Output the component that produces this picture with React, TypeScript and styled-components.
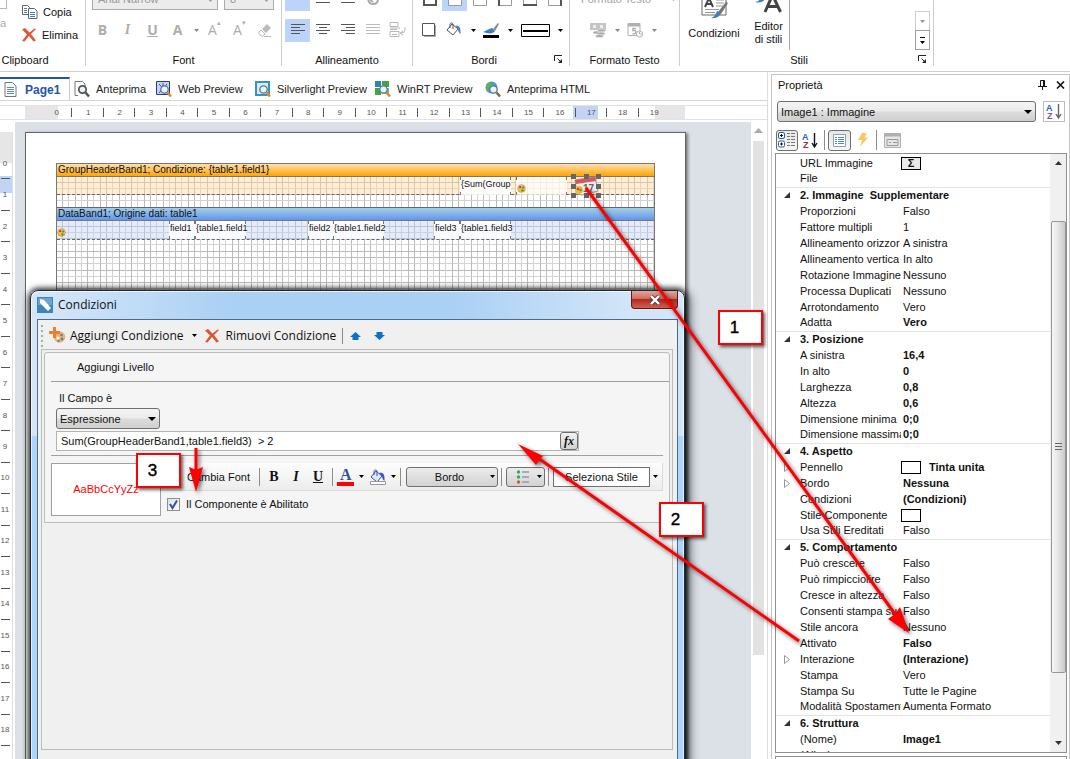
import React from "react";
import styled, { createGlobalStyle, css } from "styled-components";

const ui = `"Liberation Sans", Arial, sans-serif`;
const segoe = `"Open Sans", "Noto Sans", sans-serif`;

const Global = createGlobalStyle`
  *, *::before, *::after { box-sizing: border-box; }
  body { margin: 0; background: #fff; font: 11px/16px ${ui}; color: #111; overflow: hidden; }
  button, input, select { font: inherit; color: inherit; margin: 0; padding: 0; }
`;

/* ---------- shell ---------- */
const Shell = styled.div`
  position: relative;
  display: flex;
  flex-direction: column;
  height: 100vh;
  overflow: hidden;
`;
const Main = styled.div`
  display: flex;
  flex: 1;
  min-height: 0;
`;
const Workspace = styled.main`
  display: flex;
  flex-direction: column;
  flex: 1;
  min-width: 0;
  border-right: 1px solid #dcdcdc;
`;

/* ---------- ribbon ---------- */
const Ribbon = styled.header`
  display: flex;
  flex: none;
  height: 72px;
  border-bottom: 1px solid #cfcfcf;
`;
const Group = styled.section<{ $w: number }>`
  position: relative;
  display: flex;
  flex-direction: column;
  justify-content: flex-end;
  width: ${(p) => p.$w}px;
  height: 66px;
  border-right: 1px solid #cdcdcd;
  overflow: hidden;
`;
const GroupLabel = styled.div<{ $shift?: number; $tight?: boolean }>`
  position: relative;
  flex: none;
  height: 14px;
  margin-top: ${(p) => (p.$tight ? 2 : 10)}px;
  line-height: 16px;
  text-align: center;
  padding-right: ${(p) => p.$shift || 0}px;
`;
const Launcher = styled.button`
  position: absolute;
  right: 5px;
  top: 3px;
  width: 10px;
  height: 10px;
  border: 0;
  background: none;
  display: flex;
`;
const IconRow = styled.div<{ $pad?: number; $gap?: number }>`
  display: flex;
  flex: none;
  align-items: center;
  gap: ${(p) => p.$gap || 0}px;
  height: 24px;
  padding-left: ${(p) => p.$pad || 0}px;
  & + & { margin-top: 7px; }
`;
const IconButton = styled.button<{ $w?: number; $on?: boolean }>`
  display: flex;
  align-items: center;
  justify-content: center;
  flex: none;
  width: ${(p) => p.$w || 25}px;
  height: 23px;
  border: 0;
  background: ${(p) => (p.$on ? "#bcd4fb" : "none")};
`;
const Combo = styled.select<{ $w: number }>`
  appearance: none;
  width: ${(p) => p.$w}px;
  height: 22px;
  padding-left: 5px;
  border: 1px solid #ababab;
  border-radius: 0;
  background: #ececec;
  color: #9a9a9a;
  opacity: 1;
`;
const ComboWrap = styled.span`
  position: relative;
  display: flex;
  svg { position: absolute; right: 5px; top: 11px; pointer-events: none; }
`;
const ClipItem = styled.button`
  display: flex;
  align-items: center;
  gap: 5px;
  height: 23px;
  border: 0;
  background: none;
  &:disabled { color: #a3a3a3; }
`;
const ClipBody = styled.div`
  display: flex;
  gap: 14px;
  flex: none;
  height: 46px;
  margin-bottom: 4px;
`;
const PasteStub = styled.div`
  width: 8px;
  color: #a9a9b5;
  line-height: 20px;
  &::before { content: ""; display: block; width: 7px; height: 9px; border: solid #b5b5b5; border-width: 0 1px 1px 0; margin-bottom: 4px; }
`;
const StyleBody = styled.div`
  display: flex;
  flex: none;
  height: 56px;
  margin-bottom: -8px;
`;
const BigButton = styled.button<{ $w: number; $gap: number }>`
  display: flex;
  flex-direction: column;
  align-items: center;
  justify-content: flex-start;
  width: ${(p) => p.$w}px;
  border: 0;
  background: none;
  line-height: 13px;
  svg { flex: none; margin-bottom: ${(p) => p.$gap}px; }
`;
const Gallery = styled.div`
  display: flex;
  flex: 1;
  justify-content: flex-end;
  align-items: flex-end;
  height: 56px;
  padding-right: 3px;
  border-left: 1px solid #a8a8a8;
`;
const GalleryButtons = styled.div`
  display: flex;
  flex-direction: column;
`;
const GalleryButton = styled.button<{ $dim?: boolean }>`
  display: flex;
  align-items: center;
  justify-content: center;
  width: 15px;
  height: 20px;
  border: 1px solid ${(p) => (p.$dim ? "#cfcfcf" : "#a0a0a0")};
  background: #fff;
  & + & { margin-top: -1px; }
`;

/* ---------- page tabs and rulers ---------- */
const Tabs = styled.nav`
  display: flex;
  flex: none;
  height: 29px;
  padding-top: 5px;
  border-bottom: 1px solid #d6d6d6;
`;
const Tab = styled.button<{ $w: number; $on?: boolean }>`
  display: flex;
  align-items: center;
  gap: 6px;
  width: ${(p) => p.$w}px;
  height: 24px;
  padding-left: 4px;
  border: 0;
  background: none;
  white-space: nowrap;
  color: #222;
  ${(p) => p.$on && css`
    gap: 8px;
    height: 23px;
    font-weight: bold;
    font-size: 12px;
    color: #1f55a8;
    background: #fff;
    border-top: 2px solid #1f55a8;
    border-right: 1px solid #c9c9c9;
  `}
`;
const HRulerBar = styled.div`
  flex: none;
  margin: 4px 0 2px;
  padding-left: 25px;
  border: solid #e2e2e2;
  border-width: 1px 0;
  height: 15px;
`;
const HRuler = styled.div`
  width: 660px;
  height: 13px;
  padding-left: 16px;
  background: linear-gradient(90deg, #e6e6e6 33px, #fff 33px 548px, #c1d4f3 548px 573px, #fff 573px 630px, #e6e6e6 630px);
`;
const HCells = styled.div`
  display: grid;
  grid-template-columns: repeat(20, 1fr);
  width: 629px;
`;
const HCell = styled.span`
  position: relative;
  font-size: 8px;
  line-height: 14px;
  text-align: center;
  color: #555;
  &:not(:last-child)::after { content: ""; position: absolute; right: 0; top: 2px; width: 1px; height: 9px; background: #555; }
`;
const Body = styled.div`
  display: flex;
  flex: 1;
  min-height: 0;
`;
const VRuler = styled.div`
  flex: none;
  width: 13px;
  margin: 10px 2px 0 0;
  padding-top: 16px;
  border-right: 1px solid #e0ded8;
  background: linear-gradient(#e6e6e6 31px, #fff 31px 44px, #c1d4f3 44px 61px, #fff 61px);
`;
const VCells = styled.div`
  display: grid;
  grid-template-rows: repeat(19, 1fr);
  height: 598px;
`;
const VCell = styled.span`
  position: relative;
  display: flex;
  align-items: center;
  justify-content: center;
  padding-right: 2px;
  font-size: 8px;
  color: #555;
  &::after { content: ""; position: absolute; left: 1px; bottom: 0; width: 9px; height: 1px; background: #555; }
`;
const Canvas = styled.div`
  flex: 1;
  min-width: 0;
  padding: 10px 0 0 10px;
  background: #dce1e8;
  overflow: hidden;
`;
const Page = styled.div`
  width: 661px;
  height: 700px;
  padding: 30px 30px 0;
  border: 1px solid #666;
  background: #fff;
  box-shadow: 2px 1px 3px #777;
`;
const GridArea = styled.div`
  position: relative;
  height: 600px;
  border: 1px solid #777;
`;
const GridLines = styled.svg`
  position: absolute;
  inset: 0;
  width: 100%;
  height: 100%;
`;
const BandHead = styled.div<{ $blue?: boolean }>`
  position: relative;
  height: 13px;
  padding-left: 1px;
  line-height: 12px;
  font-size: 10px;
  border-bottom: 1px solid #777;
  background: ${(p) => (p.$blue ? "linear-gradient(#a3cfe4, #6495ed)" : "linear-gradient(#fee0b0, #ffa502)")};
  ${(p) => p.$blue && css`margin-top: 12px; border-top: 1px solid #666; height: 14px;`}
`;
const BandBody = styled.div<{ $blue?: boolean }>`
  position: relative;
  height: ${(p) => (p.$blue ? 19 : 18)}px;
  border-bottom: 1px dashed #666;
  background: ${(p) => (p.$blue ? "rgba(190,210,245,.42)" : "rgba(255,215,150,.42)")};
`;
const Field = styled.span<{ $x: number; $w: number; $faint?: boolean }>`
  position: absolute;
  top: 0;
  left: ${(p) => p.$x}px;
  width: ${(p) => p.$w}px;
  height: 18px;
  white-space: nowrap;
  font-size: 9px;
  line-height: 14px;
  background: ${(p) => (p.$faint ? "rgba(255,255,255,.7)" : "rgba(255,255,255,.85)")};
  border: solid #777;
  border-width: 0 1px;
  border-image: linear-gradient(#777 4px, transparent 4px 14px, #777 14px) 1;
`;
const Spot = styled.span<{ $x: number; $y: number }>`
  position: absolute;
  left: ${(p) => p.$x}px;
  top: ${(p) => p.$y}px;
  display: flex;
`;
const CanvasScroll = styled.div`
  display: flex;
  flex-direction: column;
  align-items: center;
  flex: none;
  width: 16px;
  padding: 6px 3px 0 2px;
  background: #fff;
`;
const CanvasThumb = styled.div`
  width: 11px;
  height: 514px;
  margin-top: 8px;
  background: #e2e2e2;
`;

/* ---------- property panel ---------- */
const Panel = styled.aside`
  display: flex;
  flex-direction: column;
  flex: none;
  width: 299px;
  margin: 2px 0 0 3px;
  padding: 0 2px 0 3px;
  border: 1px solid #c4c4c4;
  border-bottom: 0;
`;
const PanelTitle = styled.div`
  display: flex;
  align-items: center;
  gap: 9px;
  flex: none;
  height: 19px;
  padding: 0 2px 0 3px;
  h2 { flex: 1; margin: 0; font: inherit; }
`;
const Bare = styled.button`
  display: flex;
  border: 0;
  background: none;
`;
const ObjectRow = styled.div`
  display: flex;
  flex: none;
  gap: 7px;
  margin: 7px 2px 0;
  height: 21px;
`;
const SelectWrap = styled.span<{ $w?: number }>`
  position: relative;
  display: flex;
  ${(p) => (p.$w ? `width: ${p.$w}px;` : "flex: 1;")}
  svg { position: absolute; right: 4px; top: 9px; pointer-events: none; }
`;
const GlassSelect = styled.select`
  appearance: none;
  width: 100%;
  height: 21px;
  padding-left: 3px;
  border: 1px solid #707070;
  border-radius: 3px;
  background: linear-gradient(#f4f4f4, #ebebeb 48%, #dcdcdc 52%, #cfcfcf);
`;
const SortButton = styled.button`
  width: 22px;
  display: flex;
  align-items: center;
  justify-content: center;
  border: 1px solid #bdbdbd;
  background: #fff;
`;
const PanelTools = styled.div`
  display: flex;
  align-items: center;
  flex: none;
  height: 24px;
  margin: 6px 0 1px 1px;
`;
const Tool = styled.button<{ $w: number; $on?: boolean }>`
  display: flex;
  align-items: center;
  justify-content: center;
  width: ${(p) => p.$w}px;
  height: 21px;
  border: ${(p) => (p.$on ? "1px solid #6e6e6e" : "0")};
  border-radius: 3px;
  background: ${(p) => (p.$on ? "linear-gradient(#e6e6e6, #f6f6f6)" : "none")};
`;
const Sep = styled.i<{ $h?: number; $m?: string }>`
  flex: none;
  width: 1px;
  height: ${(p) => p.$h || 20}px;
  margin: ${(p) => p.$m || "0 3px"};
  background: #8c8c8c;
`;
const PropBox = styled.div`
  display: flex;
  flex: 1;
  min-height: 0;
  border: 1px solid #8f8f8f;
  overflow: hidden;
`;
const PropTable = styled.table`
  flex: 1;
  align-self: flex-start;
  table-layout: fixed;
  border-collapse: collapse;
  width: 275px;
  margin-top: 1px;
  td, th { padding: 0; height: 16px; line-height: 15px; text-align: left; white-space: nowrap; overflow: hidden; font-weight: normal; }
  tr.cat th { border-top: 1px solid #e4e4e4; font-weight: bold; }
  tr.cat td { border-top: 1px solid #e4e4e4; }
`;
const Value = styled.span<{ $b?: boolean }>`
  display: flex;
  align-items: center;
  height: 15px;
  padding-left: 2px;
  font-weight: ${(p) => (p.$b ? "bold" : "normal")};
`;
const Swatch = styled.i<{ $sum?: boolean }>`
  flex: none;
  display: flex;
  align-items: center;
  justify-content: center;
  width: 20px;
  height: 13px;
  margin: 0 8px 0 -2px;
  border: 1px solid #000;
  background: ${(p) => (p.$sum ? "#e9e9e9" : "#fff")};
  font: bold 11px/11px ${ui};
`;
const Twist = styled.span`
  display: flex;
  justify-content: center;
  padding-right: 3px;
`;
const PropScroll = styled.div`
  display: flex;
  flex-direction: column;
  align-items: center;
  flex: none;
  width: 16px;
  padding: 7px 0;
  background: #f0f0f0;
  svg { flex: none; }
`;
const PropThumb = styled.div`
  display: flex;
  align-items: center;
  justify-content: center;
  width: 15px;
  height: 452px;
  margin: 56px 0 auto;
  border: 1px solid #979797;
  border-radius: 2px;
  background: linear-gradient(90deg, #f7f7f7, #e4e4e4 50%, #c9c9c9);
`;
const HelpBox = styled.div`
  flex: none;
  height: 3px;
  margin-top: 3px;
  border: 1px solid #8f8f8f;
  border-bottom: 0;
`;

/* ---------- dialog ---------- */
const Dialog = styled.section`
  position: absolute;
  left: 30px;
  top: 290px;
  width: 655px;
  height: 520px;
  padding: 0 6px;
  border: 1px solid #1f2833;
  border-radius: 8px 8px 0 0;
  background:
    linear-gradient(90deg, transparent 20px, rgba(160,203,243,.8) 200px 420px, transparent 600px) 0 0 / 100% 28px no-repeat,
    linear-gradient(#d3e5f8 145px, #acd5fb 145px);
  box-shadow: 0 0 5px 2px rgba(0,0,0,.65), 3px 3px 10px 3px rgba(0,0,0,.45), inset 0 0 0 1px rgba(255,255,255,.7);
`;
const DialogTitle = styled.div`
  display: flex;
  align-items: center;
  gap: 5px;
  height: 28px;
  font: 12px/16px ${segoe};
  h1 { flex: 1; margin: 0; font: inherit; }
`;
const Close = styled.button`
  display: flex;
  align-items: center;
  justify-content: center;
  align-self: flex-start;
  width: 47px;
  height: 18px;
  border: 1px solid #5b1b17;
  border-top: 0;
  border-radius: 0 0 4px 4px;
  background: linear-gradient(#e2a79c, #cf6a5b 45%, #b5281c 50%, #d2604e);
`;
const Client = styled.div`
  height: 500px;
  padding: 0 4px 0 3px;
  border: 1px solid #4b6a8c;
  background: #f0f0f0;
`;
const DialogTools = styled.div`
  display: flex;
  align-items: center;
  height: 29px;
  padding-top: 2px;
  font: 12px/16px ${segoe};
`;
const Grip = styled.i`
  width: 2px;
  height: 22px;
  background: repeating-linear-gradient(#aaa 0 2px, transparent 2px 5px);
`;
const TextButton = styled.button<{ $gap?: number; $ml?: number }>`
  display: flex;
  align-items: center;
  gap: ${(p) => p.$gap || 6}px;
  margin-left: ${(p) => p.$ml || 0}px;
  border: 0;
  background: none;
  white-space: nowrap;
`;
const Outer = styled.div`
  height: 401px;
  padding: 2px;
  border: 1px solid #bcbcbc;
`;
const Rule = styled.div`
  display: flex;
  flex-direction: column;
  height: 171px;
  border: 1px solid #bcbcbc;
  border-radius: 3px 3px 0 0;
  background: #f5f5f5;
  padding-left: 6px;
`;
const RuleHead = styled.div`
  height: 29px;
  padding: 6px 0 0 26px;
  border-bottom: 1px solid #a0a0a0;
`;
const RuleField = styled.div`
  display: flex;
  flex-direction: column;
  align-items: flex-start;
  width: 523px;
  margin: 8px 0 0 5px;
  label { padding-left: 3px; height: 18px; }
`;
const ExprRow = styled.div`
  display: flex;
  width: 523px;
  height: 20px;
  margin-top: 2px;
  border: 1px solid #b4b4b4;
  background: #fff;
  input { flex: 1; min-width: 0; border: 0; outline: 0; padding-left: 4px; background: none; }
`;
const Fx = styled.button`
  width: 18px;
  height: 18px;
  border: 1px solid #6d6d6d;
  border-radius: 3px;
  background: linear-gradient(#f2f2f2, #d2d2d2);
  font: italic bold 12px/12px "Liberation Serif", serif;
`;
const FormatRow = styled.div`
  display: flex;
  margin: 4px 6px 0 0;
  padding-top: 7px;
  border-top: 1px solid #a0a0a0;
`;
const Preview = styled.div`
  flex: none;
  width: 110px;
  height: 53px;
  border: 1px solid #a0a0a0;
  background: #fff;
  color: #f00;
  line-height: 50px;
  text-align: center;
`;
const FormatSide = styled.div`
  flex: 1;
`;
const FormatTools = styled.div`
  display: flex;
  align-items: center;
  height: 28px;
  padding-left: 26px;
  border: solid #dadada;
  border-width: 0 1px 1px 0;
  background: linear-gradient(#fdfdfd, #ececec);
`;
const Letter = styled.button<{ $kind: "b" | "i" | "u" }>`
  width: 22px;
  border: 0;
  background: none;
  font: bold 14px/20px "Liberation Serif", serif;
  font-style: ${(p) => (p.$kind === "i" ? "italic" : "normal")};
  text-decoration: ${(p) => (p.$kind === "u" ? "underline" : "none")};
`;
const Glass = styled.button<{ $w: number; $white?: boolean }>`
  display: flex;
  align-items: center;
  justify-content: flex-end;
  width: ${(p) => p.$w}px;
  height: 20px;
  padding: 0 2px;
  border: 1px solid #707070;
  border-radius: ${(p) => (p.$white ? 0 : 3)}px;
  background: ${(p) => (p.$white ? "#fff" : "linear-gradient(#ececec, #d2d2d2)")};
  span { flex: 1; display: flex; justify-content: center; white-space: nowrap; }
`;
const CheckLabel = styled.label`
  display: flex;
  align-items: center;
  gap: 6px;
  margin: 5px 0 0 6px;
  line-height: 16px;
  span { display: grid; }
  span > * { grid-area: 1 / 1; }
  input { appearance: none; width: 13px; height: 13px; border: 1px solid #8e8f8f; background: linear-gradient(135deg, #dcdfe4, #fff); }
`;

/* ---------- callouts ---------- */
const Arrows = styled.svg`
  position: absolute;
  left: 0;
  top: 0;
  pointer-events: none;
  filter: drop-shadow(2px 2px 2px rgba(0,0,0,.6));
`;
const Callout = styled.div<{ $x: number; $y: number }>`
  position: absolute;
  left: ${(p) => p.$x}px;
  top: ${(p) => p.$y}px;
  width: 45px;
  height: 35px;
  padding-right: 12px;
  border: 2px solid #f00;
  background: #fff;
  box-shadow: 2px 2px 3px rgba(0,0,0,.6);
  font: 17px/32px ${ui};
  text-align: center;
  color: #000;
  -webkit-text-stroke: 0.4px #000;
`;

/* ---------- drawings ---------- */
const Caret = ({ c = "#000", w = 5 }: { c?: string; w?: number }) => (
  <svg width={w} height={Math.ceil(w / 2)} viewBox="0 0 10 6" preserveAspectRatio="none"><path d="M0 0h10L5 6z" fill={c} /></svg>
);
const LauncherIcon = () => (
  <svg width="9" height="9" viewBox="0 0 9 9" fill="none" stroke="#222"><path d="M.5 6V.5H8" /><path d="M3.500 3.500L7 7" /><path d="M8 4v4H4z" fill="#222" stroke="none" /></svg>
);
const CopyIcon = () => (
  <svg width="16" height="15" viewBox="0 0 16 15" stroke="#666" fill="#fff">
    <path d="M.5 1.500h5l2 2v7h-7z" /><path d="M6.500 4.500h6l2.500 2.500v7.500h-8.500z" />
    <path d="M2 4.500h3M2 6.500h3M2 8.500h3M8 8.500h5M8 10.500h5M8 12.500h5" stroke="#4a7ab8" />
  </svg>
);
const CrossIcon = () => (
  <svg width="15" height="14" viewBox="0 0 15 14" fill="#d9583a"><path d="M0 1.500L3 0l4.500 4.500L12.500.5 14 1 9 6l5 6.500-2.500 1L7 8l-4.500 5.500L0 13l5-6.500z" /></svg>
);
const Lines = ({ rows, c = "#555" }: { rows: [number, number][]; c?: string }) => (
  <svg width="16" height="14" viewBox="0 0 16 14" stroke={c}>
    {rows.map(([a, b], i) => <path key={i} d={`M${a} ${i * 3 + 1.5}H${b}`} />)}
  </svg>
);
const Box = ({ c = "#999", side = "", fill = "none" }: { c?: string; side?: string; fill?: string }) => (
  <svg width="14" height="15" viewBox="0 0 14 15" fill={fill} stroke={c}>
    <path d="M.5 .5h13v13H.5z" />
    {side === "all" && <path d="M1 1h12v12H1z" strokeWidth="2" stroke="#555" />}
    {side === "b" && <path d="M0 13h14" strokeWidth="2" stroke="#555" />}
    {side === "l" && <path d="M1 0v14" strokeWidth="2" stroke="#555" />}
    {side === "r" && <path d="M13 0v14" strokeWidth="2" stroke="#555" />}
  </svg>
);
const ShadowBox = () => (
  <svg width="15" height="15" viewBox="0 0 15 15"><path d="M2 2h12v12H2z" fill="#aaa" /><path d="M.5.5h12v12H.5z" fill="#fff" stroke="#555" /></svg>
);
const Bucket = ({ blue }: { blue?: boolean }) => (
  <svg width="17" height="16" viewBox="0 0 17 16">
    <path d="M6 2l6 5-5 6-6-5z" fill={blue ? "#dfe8f8" : "#fff"} stroke={blue ? "#3a55a0" : "#555"} />
    <path d="M4 6V2.500C4 .5 7 .5 7 2.500V7" fill="none" stroke={blue ? "#3a55a0" : "#555"} />
    <path d="M9 4c4-1 6 1 5.500 8-1.500-1-2.500-3-2.500-5z" fill={blue ? "#3a55c0" : "#4a7fc0"} />
    {blue && <path d="M.5 12.500h15v3H.5z" fill="#fff" stroke="#999" />}
  </svg>
);
const PenIcon = () => (
  <svg width="17" height="17" viewBox="0 0 17 17"><path d="M10 7l5-6 1 1-4 7z" fill="#888" /><path d="M0 10c3-1 5-3 9-4l3 3c-2 3-6 3-12 1z" fill="#3f7cc0" /><path d="M0 13h16v3H0z" /></svg>
);
const LineStyle = () => (
  <svg width="29" height="13" viewBox="0 0 29 13"><path d="M.5.5h28v12H.5z" fill="#fff" stroke="#000" /><path d="M2 7h25" stroke="#000" strokeWidth="2" /></svg>
);
const Eraser = () => (
  <svg width="14" height="13" viewBox="0 0 14 13"><path d="M9 0l4 4-5 5-4-4z" fill="#bbb" /><path d="M3 6l4 4-2 2H3L.5 9z" fill="none" stroke="#bbb" /><path d="M6 12.500h7" stroke="#bbb" /></svg>
);
const WrapIcon = () => (
  <svg width="17" height="16" viewBox="0 0 17 16" fill="none" stroke="#b8b8b8"><path d="M1 .5h8v4H1zM1 7.500h7M1 9.500h9v5H1zM3 12.500h5M1 6h10M16 5v3q0 3-4 3M14 9l-3 2 3 2" /></svg>
);
const CoinsIcon = () => (
  <svg width="17" height="16" viewBox="0 0 17 16"><path d="M0 1h16v7H0z" fill="#c4c4c4" /><path d="M3 3h3v3H3zM10 3h3v3h-3z" fill="#eee" /><ellipse cx="11.500" cy="8.500" rx="4" ry="1.500" fill="#aaa" stroke="#eee" strokeWidth=".6" /><ellipse cx="6" cy="10.500" rx="3" ry="1.300" fill="#aaa" /><ellipse cx="11" cy="11.500" rx="4" ry="1.500" fill="#aaa" stroke="#eee" strokeWidth=".6" /><ellipse cx="9.500" cy="14" rx="4" ry="1.500" fill="#aaa" stroke="#eee" strokeWidth=".6" /></svg>
);
const DateIcon = () => (
  <svg width="17" height="16" viewBox="0 0 17 16" fill="none" stroke="#b0b0b0"><path d="M1 1.500h12v12H1z" /><path d="M1 3h12" strokeWidth="3" /><path d="M9 6.500H6v2q3-.5 3 1.500T5.500 12" strokeWidth="1.500" /><circle cx="12.500" cy="12" r="3" fill="#fff" /><path d="M12.500 10v2h2" /></svg>
);
const StyleSheetIcon = () => (
  <svg width="27" height="26" viewBox="0 0 27 26"><path d="M1 1h24v20H1z" fill="#fff" stroke="#666" /><path d="M4 13l4-9 4 9M5 10h6" stroke="#444" strokeWidth="2" fill="none" /><path d="M15 6h8M15 9h8M15 12h7M4 15.500h14M4 18.500h10" stroke="#999" /><path d="M25 8l2 1-7 11-3-2z" fill="#777" /><path d="M16 17l4 2q-2 6-10 5 4-1 6-7z" fill="#3f7cc0" /></svg>
);
const StyleEditorIcon = () => (
  <svg width="28" height="22" viewBox="0 0 28 22"><path d="M10 18L17.500 1l8 17M13 12.500h10" stroke="#444" strokeWidth="3" fill="none" /><path d="M0 8q5 0 5-5l5 2q-3 5-10 3z" fill="#3f7cc0" /></svg>
);
const DocIcon = () => (
  <svg width="13" height="15" viewBox="0 0 13 15" fill="#fff" stroke="#777"><path d="M1 .5h7.500L12 4v10.500H1z" /><path d="M3 5.500h7M3 7.500h7M3 9.500h7M3 11.500h7" stroke="#5b86bd" /></svg>
);
const Magnifier = ({ kind }: { kind: "page" | "web" | "silver" | "win" | "html" }) => (
  <svg width="16" height="17" viewBox="0 0 16 17">
    {kind === "page" && <path d="M4 14.500H1V.5h7.500L11 3v3" fill="#fff" stroke="#777" />}
    {kind === "web" && <><path d="M.5.5h13v13H.5z" fill="#c9d2f2" stroke="#26398f" /><path d="M3 3l8 9M11 3l-8 9M7 2v10" stroke="#3a4fa8" /></>}
    {kind === "silver" && <path d="M1 1h13v13H1z" fill="#d4ecf7" stroke="#3b93bd" strokeWidth="2" />}
    {kind === "win" && <><path d="M0 0h6v6H0z" fill="#2f86b5" /><path d="M7 0h7v6H7z" fill="#3fa545" /><path d="M0 7h6v7H0z" fill="#3fa545" /><path d="M7 7h7v6H7z" fill="#7ac" /></>}
    {kind === "html" && <><circle cx="6.500" cy="6.500" r="6" fill="#4c9bd8" /><path d="M2 3q4-3 5 0t-2 4-3 3Q0 7 2 3z" fill="#5fb33f" /></>}
    <circle cx="8.500" cy="8.500" r="3.700" fill="#e8f3fb" stroke={kind === "page" ? "#555" : "#5b7690"} strokeWidth={kind === "page" ? 1.800 : 1.300} />
    <path d="M11.500 11.500l3.500 4" stroke={kind === "page" ? "#555" : kind === "html" ? "#776a50" : "#e08a1e"} strokeWidth="2.500" />
  </svg>
);
const Palette = ({ s = 9 }: { s?: number }) => (
  <svg width={s} height={s} viewBox="0 0 10 10"><circle cx="5" cy="5" r="4.300" fill="#f0c050" stroke="#b98a2c" strokeWidth=".6" /><circle cx="3.500" cy="3.500" r="1.200" fill="#d33" /><circle cx="6.800" cy="4" r="1.200" fill="#38b" /><circle cx="6" cy="7" r="1.300" fill="#3a3" /></svg>
);
const AddPalette = () => (
  <svg width="17" height="17" viewBox="0 0 17 17"><circle cx="10.500" cy="10" r="5.800" fill="#efb466" /><circle cx="9" cy="11" r="1.500" fill="#fff" /><circle cx="12.500" cy="8" r="1.300" fill="#4c86c6" /><circle cx="13" cy="12" r="1.400" fill="#4c86c6" /><circle cx="9.500" cy="14" r="1.200" fill="#4c86c6" /><path d="M4 0h3v4h4v3H7v4H4V7H0V4h4z" fill="#e38530" /></svg>
);
const Block = ({ up }: { up?: boolean }) => (
  <svg width="11" height="8" viewBox="0 0 11 8" fill="#0c72c6"><path d={up ? "M5.500 0L11 5H8.500v3h-6V5H0z" : "M5.500 8L11 3H8.500V0h-6v3H0z"} /></svg>
);
const AZ = ({ z = "#9b2f3a", arrow = "#111" }: { z?: string; arrow?: string }) => (
  <svg width="17" height="17" viewBox="0 0 17 17"><text x="0" y="8" fontSize="9" fontFamily="Liberation Sans" fontWeight="bold" fill="#2f62b5">A</text><text x="1" y="16" fontSize="9" fontFamily="Liberation Sans" fontWeight="bold" fill={z}>Z</text><path d="M12.500 1v13M10 11l2.500 4 2.500-4" fill="none" stroke={arrow} strokeWidth="1.400" /></svg>
);
const TreeIcon = () => (
  <svg width="18" height="16" viewBox="0 0 18 16" fill="#fff" stroke="#2c5ea8"><rect x=".5" y=".5" width="6" height="6" rx="1.500" /><rect x=".5" y="9" width="6" height="6" rx="1.500" /><path d="M2 3.500h3M3.500 2v3M2 12h3M3.500 10.500v3" stroke="#111" /><path d="M9 1.500h3M9 4.500h3M9 7.500h3M9 10.500h3M9 13.500h3M13 1.500h4M13 4.500h4M13 7.500h4M13 10.500h4M13 13.500h4" stroke="#777" /></svg>
);
const PropsIcon = () => (
  <svg width="13" height="13" viewBox="0 0 13 13" fill="#fff" stroke="#8aa0b8"><path d="M.5.5h12v12H.5z" /><path d="M2 3.500h2M5 3.500h6M2 5.500h2M5 5.500h6M2 7.500h2M5 7.500h6M2 9.500h2M5 9.500h6" stroke="#4a87d0" /></svg>
);
const Bolt = () => <svg width="10" height="14" viewBox="0 0 10 14"><path d="M4 0h5L6.500 4.500H10L2 14l2-7H0z" fill="#fbc766" /></svg>;
const FormIcon = () => (
  <svg width="17" height="15" viewBox="0 0 17 15" fill="#e6e6e6" stroke="#b0b0b0"><path d="M.5.5h16v14H.5z" /><path d="M1 2h15" strokeWidth="3" /><path d="M3 6.500h11v6H3zM5 9.500h2M9 9.500h4" stroke="#999" /></svg>
);
const CalendarGlyph = () => (
  <svg width="31" height="25" viewBox="-2 -2 31 25">
    <path d="M2 4l20-3 3 14-16 4-5-1z" fill="#eee" stroke="#999" /><path d="M2 4l20-3 1 4L3 8z" fill="#d8545c" />
    <text x="10" y="16" fontSize="10" fontWeight="bold" fill="#666" fontFamily="Liberation Sans">17</text>
    <circle cx="6" cy="14" r="4" fill="#f0b840" /><circle cx="5" cy="13" r="1.200" fill="#d33" /><circle cx="7.500" cy="14" r="1.200" fill="#3a3" />
    {[0, 13, 25].map((x) => [0, 10, 19].map((y) => x === 13 && y === 10 ? null : <rect key={x + "-" + y} x={x - 2} y={y - 2} width="5" height="5" fill="#666" />))}
  </svg>
);
const BulletIcon = () => (
  <svg width="14" height="14" viewBox="0 0 14 14"><circle cx="2.500" cy="2" r="1.700" fill="#2fae5a" /><circle cx="2.500" cy="7" r="1.700" fill="#2fae5a" /><circle cx="2.500" cy="12" r="1.700" fill="#e2523a" /><path d="M6 2h7M6 7h7M6 12h7" stroke="#a3abba" strokeWidth="2" /></svg>
);

/* ---------- data ---------- */
type Prop = { n: string; v?: string; b?: boolean; cat?: boolean; exp?: boolean; sw?: "sum" | "box" };
const props: Prop[] = [
  { n: "URL Immagine", sw: "sum" },
  { n: "File" },
  { n: "2. Immagine\u00a0 Supplementare", cat: true },
  { n: "Proporzioni", v: "Falso" },
  { n: "Fattore multipli", v: "1" },
  { n: "Allineamento orizzor", v: "A sinistra" },
  { n: "Allineamento vertica", v: "In alto" },
  { n: "Rotazione Immagine", v: "Nessuno" },
  { n: "Processa Duplicati", v: "Nessuno" },
  { n: "Arrotondamento", v: "Vero" },
  { n: "Adatta", v: "Vero", b: true },
  { n: "3. Posizione", cat: true },
  { n: "A sinistra", v: "16,4", b: true },
  { n: "In alto", v: "0", b: true },
  { n: "Larghezza", v: "0,8", b: true },
  { n: "Altezza", v: "0,6", b: true },
  { n: "Dimensione minima", v: "0;0", b: true },
  { n: "Dimensione massima", v: "0;0", b: true },
  { n: "4. Aspetto", cat: true },
  { n: "Pennello", v: "Tinta unita", b: true, exp: true, sw: "box" },
  { n: "Bordo", v: "Nessuna", b: true, exp: true },
  { n: "Condizioni", v: "(Condizioni)", b: true },
  { n: "Stile Componente", sw: "box" },
  { n: "Usa Stili Ereditati", v: "Falso" },
  { n: "5. Comportamento", cat: true },
  { n: "Può crescere", v: "Falso" },
  { n: "Può rimpicciolire", v: "Falso" },
  { n: "Cresce in altezza", v: "Falso" },
  { n: "Consenti stampa su", v: "Falso" },
  { n: "Stile ancora", v: "Nessuno" },
  { n: "Attivato", v: "Falso", b: true },
  { n: "Interazione", v: "(Interazione)", b: true, exp: true },
  { n: "Stampa", v: "Vero" },
  { n: "Stampa Su", v: "Tutte le Pagine" },
  { n: "Modalità Spostament", v: "Aumenta Formato" },
  { n: "6. Struttura", cat: true },
  { n: "(Nome)", v: "Image1", b: true },
  { n: "(Alias)" },
];

const full: [number, number][] = [[1, 15], [1, 15], [1, 15], [1, 15]];
const gridSteps = [0, 6, 13, 19, 25, 31, 38];

const FontKey = styled(IconButton)`
  font: bold 14px/20px "Open Sans", sans-serif;
  color: #adadad;
  i { font-family: "Liberation Serif", serif; }
  sup { font-size: 7px; line-height: 7px; align-self: flex-start; }
  &.thin { font-weight: normal; }
`;
const FontRow = () => (
  <IconRow $pad={4}>
    <FontKey>B</FontKey><FontKey><i>I</i></FontKey><FontKey><u>U</u></FontKey>
    <FontKey>A</FontKey><FontKey $w={12} aria-label="Menu colore testo"><Caret c="#888" /></FontKey>
    <FontKey className="thin">A<sup>▴</sup></FontKey><FontKey className="thin">A<sup>▾</sup></FontKey>
    <FontKey aria-label="Cancella"><Eraser /></FontKey>
  </IconRow>
);

const RibbonBar = () => (
  <Ribbon>
    <Group $w={86}>
      <ClipBody>
        <PasteStub>a</PasteStub>
        <div>
          <ClipItem><CopyIcon />Copia</ClipItem>
          <ClipItem><CrossIcon />Elimina</ClipItem>
        </div>
      </ClipBody>
      <GroupLabel $shift={35} $tight>Clipboard</GroupLabel>
    </Group>
    <Group $w={196}>
      <IconRow $pad={6} $gap={6}>
        <ComboWrap><Combo $w={126} disabled aria-label="Carattere"><option>Arial Narrow</option></Combo><Caret c="#999" /></ComboWrap>
        <ComboWrap><Combo $w={50} disabled aria-label="Dimensione"><option>8</option></Combo><Caret c="#999" /></ComboWrap>
      </IconRow>
      <FontRow />
      <GroupLabel>Font</GroupLabel>
    </Group>
    <Group $w={131}>
      <IconRow $pad={3}>
        <IconButton $on aria-label="In alto" />
        <IconButton aria-label="Al centro"><Lines rows={[[0, 0], [1, 15], [0, 0], [1, 15]]} /></IconButton>
        <IconButton aria-label="In basso"><Lines rows={[[0, 0], [0, 0], [3, 13], [1, 15]]} /></IconButton>
        <IconButton aria-label="Angolo"><svg width="14" height="14" viewBox="0 0 14 14" fill="none" stroke="#aaa" strokeWidth="2"><path d="M2 5q0 7 5 7t5-5-5-4-3 4 3 2" /></svg></IconButton>
      </IconRow>
      <IconRow $pad={3}>
        <IconButton $on aria-label="Sinistra"><Lines rows={[[1, 15], [1, 10], [1, 15], [1, 10]]} /></IconButton>
        <IconButton aria-label="Centro"><Lines rows={[[1, 15], [4, 12], [1, 15], [4, 12]]} /></IconButton>
        <IconButton aria-label="Destra"><Lines rows={[[1, 15], [6, 15], [1, 15], [6, 15]]} /></IconButton>
        <IconButton aria-label="Giustificato"><Lines rows={full} c="#bbb" /></IconButton>
        <IconButton aria-label="A capo"><WrapIcon /></IconButton>
      </IconRow>
      <GroupLabel>Allineamento</GroupLabel>
    </Group>
    <Group $w={157}>
      <IconRow $pad={4}>
        <IconButton aria-label="Tutti"><Box side="all" /></IconButton>
        <IconButton $on aria-label="Nessuno"><Box fill="#fff" /></IconButton>
        <IconButton aria-label="Sopra"><Box /></IconButton>
        <IconButton aria-label="Lato sinistro"><Box side="l" /></IconButton>
        <IconButton aria-label="Sotto"><Box side="b" /></IconButton>
        <IconButton aria-label="Lato destro"><Box side="r" /></IconButton>
      </IconRow>
      <IconRow $pad={4}>
        <IconButton aria-label="Ombra"><ShadowBox /></IconButton>
        <IconButton aria-label="Riempimento"><Bucket /></IconButton>
        <IconButton $w={12} aria-label="Menu riempimento"><Caret /></IconButton>
        <IconButton aria-label="Colore bordo"><PenIcon /></IconButton>
        <IconButton $w={12} aria-label="Menu colore"><Caret /></IconButton>
        <IconButton $w={39} aria-label="Stile linea"><LineStyle /></IconButton>
        <IconButton $w={10} aria-label="Menu stile"><Caret /></IconButton>
      </IconRow>
      <GroupLabel $shift={14}>Bordi<Launcher aria-label="Opzioni bordi"><LauncherIcon /></Launcher></GroupLabel>
    </Group>
    <Group $w={110}>
      <IconRow $pad={11} $gap={20}><ClipItem disabled>Formato Testo</ClipItem><Caret c="#999" /></IconRow>
      <IconRow $pad={16}>
        <IconButton aria-label="Valuta"><CoinsIcon /></IconButton>
        <IconButton $w={12} aria-label="Menu valuta"><Caret c="#888" /></IconButton>
        <IconButton aria-label="Data"><DateIcon /></IconButton>
        <IconButton $w={12} aria-label="Menu data"><Caret c="#888" /></IconButton>
      </IconRow>
      <GroupLabel>Formato Testo</GroupLabel>
    </Group>
    <Group $w={254}>
      <StyleBody>
        <BigButton $w={68} $gap={7}><StyleSheetIcon />Condizioni</BigButton>
        <BigButton $w={41} $gap={4}><StyleEditorIcon />Editor<br />di stili</BigButton>
        <Gallery>
          <GalleryButtons>
            <GalleryButton $dim aria-label="Su"><Caret c="#999" /></GalleryButton>
            <GalleryButton aria-label="Altri stili"><svg width="5" height="7" viewBox="0 0 5 7"><path d="M0 0h5v1H0zM0 4h5L2.500 7z" /></svg></GalleryButton>
          </GalleryButtons>
        </Gallery>
      </StyleBody>
      <GroupLabel $shift={15}>Stili<Launcher aria-label="Opzioni stili"><LauncherIcon /></Launcher></GroupLabel>
    </Group>
  </Ribbon>
);

const Designer = () => (
  <Workspace>
    <Tabs>
      <Tab $w={70} $on><DocIcon />Page1</Tab>
      <Tab $w={82}><Magnifier kind="page" />Anteprima</Tab>
      <Tab $w={99}><Magnifier kind="web" />Web Preview</Tab>
      <Tab $w={120}><Magnifier kind="silver" />Silverlight Preview</Tab>
      <Tab $w={110}><Magnifier kind="win" />WinRT Preview</Tab>
      <Tab $w={110}><Magnifier kind="html" />Anteprima HTML</Tab>
    </Tabs>
    <HRulerBar><HRuler><HCells>{Array.from({ length: 20 }, (_, i) => <HCell key={i}>{i}</HCell>)}</HCells></HRuler></HRulerBar>
    <Body>
      <VRuler><VCells>{Array.from({ length: 19 }, (_, i) => <VCell key={i}>{i}</VCell>)}</VCells></VRuler>
      <Canvas>
        <Page>
          <GridArea>
            <GridLines>
              <defs>
                <pattern id="grid" width="44" height="44" patternUnits="userSpaceOnUse">
                  {gridSteps.map((s, i) => (
                    <path key={s} d={`M${s + 5} 0h1v44h-1zM0 ${s + 5}h44v1H0z`} fill={i % 2 ? "#d4d4d4" : "#bababa"} />
                  ))}
                </pattern>
              </defs>
              <rect width="100%" height="100%" fill="url(#grid)" />
            </GridLines>
            <BandHead>GroupHeaderBand1; Condizione: {"{table1.field1}"}</BandHead>
            <BandBody>
              <Field $x={403} $w={51}>{"{Sum(Group"}</Field>
              <Field $x={459} $w={51} $faint />
              <Spot $x={460} $y={7}><Palette /></Spot>
              <Spot $x={514} $y={-3}><CalendarGlyph /></Spot>
            </BandBody>
            <BandHead $blue>DataBand1; Origine dati: table1</BandHead>
            <BandBody $blue>
              <Spot $x={0} $y={7}><Palette /></Spot>
              <Field $x={112} $w={26}>field1</Field>
              <Field $x={138} $w={51}>{"{table1.field1"}</Field>
              <Field $x={251} $w={26}>field2</Field>
              <Field $x={276} $w={51}>{"{table1.field2"}</Field>
              <Field $x={377} $w={26}>field3</Field>
              <Field $x={403} $w={51}>{"{table1.field3"}</Field>
            </BandBody>
          </GridArea>
        </Page>
      </Canvas>
      <CanvasScroll><svg width="9" height="5" viewBox="0 0 9 5"><path d="M4.500 0L9 5H0z" fill="#aaa" /></svg><CanvasThumb /></CanvasScroll>
    </Body>
  </Workspace>
);

const Properties = () => (
  <Panel>
    <PanelTitle>
      <h2>Proprietà</h2>
      <Bare aria-label="Blocca"><svg width="9" height="10" viewBox="0 0 9 10" fill="none" stroke="#111"><path d="M2.500 6V.5h4V6M5.500 1v5M0 6.500h9M4.500 7v3" /></svg></Bare>
      <Bare aria-label="Chiudi"><svg width="9" height="8" viewBox="0 0 9 8" stroke="#111" strokeWidth="1.600"><path d="M1 .5l7 7M8 .5l-7 7" /></svg></Bare>
    </PanelTitle>
    <ObjectRow>
      <SelectWrap><GlassSelect aria-label="Oggetto"><option>Image1 : Immagine</option></GlassSelect><Caret w={8} /></SelectWrap>
      <SortButton aria-label="Ordina"><AZ z="#8a4fb0" arrow="#666" /></SortButton>
    </ObjectRow>
    <PanelTools>
      <Tool $w={22} $on aria-label="Per categoria"><TreeIcon /></Tool>
      <Tool $w={24} aria-label="Alfabetico"><AZ /></Tool>
      <Sep $m="0 3px 0 2px" />
      <Tool $w={23} $on aria-label="Proprietà"><PropsIcon /></Tool>
      <Tool $w={24} aria-label="Eventi"><Bolt /></Tool>
      <Sep $m="0 3px 0 1px" />
      <Tool $w={24} aria-label="Pagine"><FormIcon /></Tool>
    </PanelTools>
    <PropBox>
      <PropTable>
        <colgroup><col style={{ width: 24 }} /><col style={{ width: 101 }} /><col /></colgroup>
        <tbody>
          {props.map((p) => p.cat ? (
            <tr key={p.n} className="cat">
              <td><Twist><svg width="6" height="6" viewBox="0 0 6 6"><path d="M6 0v6H0z" fill="#333" /></svg></Twist></td>
              <th colSpan={2}>{p.n}</th>
            </tr>
          ) : (
            <tr key={p.n}>
              <td>{p.exp && <Twist><svg width="6" height="9" viewBox="0 0 6 9"><path d="M.5.5v8l5-4z" fill="#fff" stroke="#999" /></svg></Twist>}</td>
              <th>{p.n}</th>
              <td><Value $b={p.b}>{p.sw && <Swatch $sum={p.sw === "sum"}>{p.sw === "sum" ? "Σ" : ""}</Swatch>}{p.v}</Value></td>
            </tr>
          ))}
        </tbody>
      </PropTable>
      <PropScroll>
        <svg width="7" height="4" viewBox="0 0 7 4"><path d="M3.500 0L7 4H0z" fill="#333" /></svg>
        <PropThumb><svg width="7" height="8" viewBox="0 0 7 8" stroke="#666"><path d="M0 .5h7M0 3.500h7M0 6.500h7" /></svg></PropThumb>
        <svg width="7" height="4" viewBox="0 0 7 4"><path d="M0 0h7L3.500 4z" fill="#333" /></svg>
      </PropScroll>
    </PropBox>
    <HelpBox />
  </Panel>
);

const Conditions = () => (
  <Dialog role="dialog" aria-label="Condizioni">
    <DialogTitle>
      <svg width="16" height="16" viewBox="0 0 16 16"><rect width="16" height="16" fill="#3f83bf" /><rect x="1" y="1" width="14" height="7" fill="#6aa3d4" /><path d="M3 2l4 1 7 8-3 3-8-8z" fill="#fff" /></svg>
      <h1>Condizioni</h1>
      <Close aria-label="Chiudi"><svg width="12" height="10" viewBox="0 0 12 10"><path d="M2 1l8 8M10 1L2 9" stroke="#444" strokeWidth="4" /><path d="M2 1l8 8M10 1L2 9" stroke="#fff" strokeWidth="2.400" /></svg></Close>
    </DialogTitle>
    <Client>
      <DialogTools>
        <Grip />
        <TextButton $ml={6} $gap={4}><AddPalette />Aggiungi Condizione</TextButton>
        <TextButton $ml={8} aria-label="Altre condizioni"><Caret /></TextButton>
        <TextButton $ml={8}><CrossIcon />Rimuovi Condizione</TextButton>
        <Sep $h={16} $m="0 7px 0 6px" />
        <Bare aria-label="Su"><Block up /></Bare>
        <TextButton $ml={13} aria-label="Giù"><Block /></TextButton>
      </DialogTools>
      <Outer>
        <Rule>
          <RuleHead><Bare>Aggiungi Livello</Bare></RuleHead>
          <RuleField>
            <label htmlFor="field">Il Campo è</label>
            <SelectWrap $w={104}><GlassSelect id="field"><option>Espressione</option></GlassSelect><Caret w={8} /></SelectWrap>
            <ExprRow><input aria-label="Espressione" defaultValue={"Sum(GroupHeaderBand1,table1.field3)  > 2"} /><Fx>fx</Fx></ExprRow>
          </RuleField>
          <FormatRow>
            <Preview>AaBbCcYyZz</Preview>
            <FormatSide>
              <FormatTools>
                <TextButton>Cambia Font</TextButton>
                <Sep $h={18} $m="0 3px 0 9px" />
                <Letter $kind="b">B</Letter><Letter $kind="i">I</Letter><Letter $kind="u">U</Letter>
                <Sep $h={18} $m="0 4px 0 3px" />
                <Bare aria-label="Colore testo"><svg width="18" height="18" viewBox="0 0 18 18"><text x="3" y="12" fontSize="16" fontWeight="bold" fontFamily="Liberation Serif" fill="#34529c">A</text><path d="M0 14h17v4H0z" fill="#f00" /></svg></Bare>
                <TextButton $ml={4} aria-label="Menu colore"><Caret /></TextButton>
                <TextButton $ml={6} aria-label="Sfondo"><Bucket blue /></TextButton>
                <TextButton $ml={4} aria-label="Menu sfondo"><Caret /></TextButton>
                <Sep $h={18} $m="0 5px 0 4px" />
                <Glass $w={92}><span>Bordo</span><Caret /></Glass>
                <Sep $h={18} $m="0 4px 0 3px" />
                <Glass $w={39} aria-label="Icone"><span><BulletIcon /></span><Caret /></Glass>
                <Sep $h={18} $m="0 4px 0 3px" />
                <Glass $w={97} $white><span>Seleziona Stile</span></Glass>
                <TextButton $ml={3} aria-label="Menu stile"><Caret /></TextButton>
              </FormatTools>
              <CheckLabel>
                <span><input type="checkbox" defaultChecked /><svg width="13" height="13" viewBox="0 0 13 13"><path d="M3 6l2.500 4L10 2.500" fill="none" stroke="#3c5090" strokeWidth="2" /></svg></span>
                Il Componente è Abilitato
              </CheckLabel>
            </FormatSide>
          </FormatRow>
        </Rule>
      </Outer>
    </Client>
  </Dialog>
);

export default function App() {
  return (
    <Shell>
      <Global />
      <RibbonBar />
      <Main>
        <Designer />
        <Properties />
      </Main>
      <Conditions />
      <Arrows width="1070" height="759" viewBox="0 0 1070 759" stroke="#f00" strokeWidth="3" fill="#f00">
        <path d="M586 188L895 614" /><path d="M909 633L888 619L895 614L900 607Z" stroke="none" />
        <path d="M799 641L538 458" /><path d="M518 444L543 456L540 459L536 465Z" stroke="none" />
        <path d="M196 448V472" /><path d="M196 492L189 467L196 470L203 467Z" stroke="none" />
      </Arrows>
      <Callout $x={718} $y={310}>1</Callout>
      <Callout $x={659} $y={502}>2</Callout>
      <Callout $x={136} $y={453}>3</Callout>
    </Shell>
  );
}
